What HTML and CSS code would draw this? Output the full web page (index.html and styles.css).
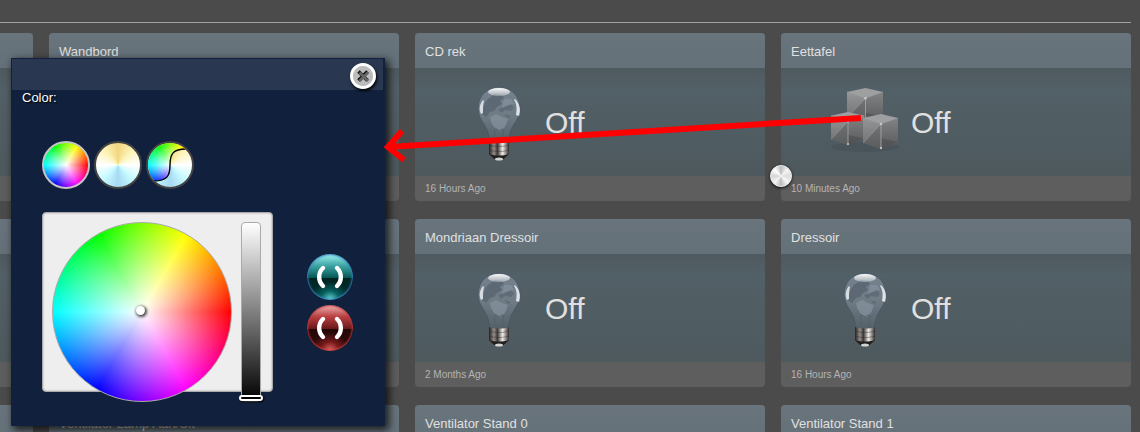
FILE: index.html
```
<!DOCTYPE html>
<html lang="nl">
<head>
    <meta charset="UTF-8">
    <meta name="viewport" content="width=device-width, initial-scale=1.0">
    <title>Dashboard</title>
    <link rel="stylesheet" href="styles.css">
</head>
<body>
    <!-- shared icons -->
    <svg class="defs" width="0" height="0" aria-hidden="true">
        <defs>
            <linearGradient id="glass" x1="0" y1="0" x2="0" y2="1">
                <stop offset="0" stop-color="#75818d"/>
                <stop offset="0.5" stop-color="#6f7c86"/>
                <stop offset="1" stop-color="#536067"/>
            </linearGradient>
            <linearGradient id="cap" x1="0" y1="0" x2="1" y2="0">
                <stop offset="0" stop-color="#25201e"/>
                <stop offset="0.25" stop-color="#958f8a"/>
                <stop offset="0.42" stop-color="#3d3836"/>
                <stop offset="0.68" stop-color="#f0eeeb"/>
                <stop offset="1" stop-color="#302c2b"/>
            </linearGradient>
            <linearGradient id="shine" x1="0" y1="0" x2="0" y2="1">
                <stop offset="0" stop-color="#ffffff" stop-opacity="0.95"/>
                <stop offset="1" stop-color="#ffffff" stop-opacity="0.3"/>
            </linearGradient>
            <linearGradient id="faceLeft" x1="0" y1="0" x2="0" y2="1">
                <stop offset="0" stop-color="#939596"/>
                <stop offset="1" stop-color="#6b6d6e"/>
            </linearGradient>
            <linearGradient id="faceRight" x1="0" y1="0" x2="0" y2="1">
                <stop offset="0" stop-color="#808283"/>
                <stop offset="1" stop-color="#58595a"/>
            </linearGradient>
            <symbol id="bulb" viewBox="0 0 48 80">
                <path d="M24 4C12 4 3 13 3 25c0 10 6 15 9 22 2 5 2 9 3 13h18c1-4 1-8 3-13 3-7 9-12 9-22C45 13 36 4 24 4z" fill="url(#glass)" stroke="#4a5768"/>
                <path d="M13 16l7-5 7 1 2 3-4 3 2 3-5 3-3 4-4 1-4 5-4-3c0-6 2-11 6-15z" fill="#55616c" opacity="0.75"/>
                <path d="M23 26l6-2 7-4 3 5-3 3-6-1-4 3zM29 31l7 2-3 2z" fill="#55616c" opacity="0.6"/>
                <path d="M15 34l6-3 6 3 6 2-3 8-5 4-6-4-3-5z" fill="#87939f" opacity="0.7"/>
                <path d="M29 16l7 0 3 5-8 2-4 2z" fill="#8b94a2" opacity="0.6"/>
                <path d="M20 57v-7l-1-3 3-1 2 2 2-2 3 1-1 3v7" fill="none" stroke="#4a5964" opacity="0.45"/>
                <ellipse cx="24" cy="9" rx="11" ry="4" fill="url(#shine)"/>
                <path d="M8 17c-4 5-4 10-2 14l2-1c0-4 0-9 1-12z" fill="#e2e7eb" opacity="0.9"/>
                <path d="M40 16c5 5 6 11 4 17l-3-1c1-6 1-11-2-15z" fill="#e8edf0" opacity="0.9"/>
                <path d="M14 58c6 2 14 2 20 0v13l-5 5H19l-5-5z" fill="url(#cap)"/>
                <path d="M14 62c6 2 14 2 20 0M14 67c6 2 14 2 20 0" fill="none" stroke="#282321" opacity="0.4"/>
                <path d="M14 71c6 2 14 2 20 0l-5 5H19z" fill="#221e1d"/>
                <ellipse cx="24" cy="76" rx="4" ry="1.6" fill="#d2d4d2"/>
            </symbol>
            <symbol id="cube" viewBox="0 0 36 36">
                <path d="M18 0l17 4-17 6L0 4z" fill="#9d9fa0"/>
                <path d="M0 4l18 6v25L0 29z" fill="url(#faceLeft)"/>
                <path d="M35 4l-17 6v25l17-6z" fill="url(#faceRight)"/>
                <path d="M0 29l18-19v25z" fill="#303334" opacity="0.28"/>
                <path d="M35 28L18 24v11z" fill="#303334" opacity="0.25"/>
                <path d="M0 29L18 10M0 4l18 6 17-6" fill="none" stroke="#b4b6b6" stroke-width="0.7" opacity="0.5"/>
                <path d="M18 10v25" fill="none" stroke="#b4b6b6" opacity="0.7"/>
                <circle cx="18" cy="10" r="1.2" fill="#c9cbcc"/>
                <circle cx="18" cy="34" r="1.2" fill="#b9bbbc"/>
            </symbol>
        </defs>
    </svg>

    <header class="topbar"></header>

    <main class="grid">
        <section class="card"><h2></h2><div class="card-body"></div><footer></footer></section>
        <section class="card">
            <h2>Wandbord</h2>
            <div class="card-body"></div>
            <footer></footer>
        </section>
        <section class="card">
            <h2>CD rek</h2>
            <div class="card-body">
                <svg class="icon"><use href="#bulb"/></svg>
                <span class="state">Off</span>
            </div>
            <footer>16 Hours Ago</footer>
        </section>
        <section class="card">
            <h2>Eettafel</h2>
            <div class="card-body">
                <svg class="icon" viewBox="0 0 72 80">
                    <ellipse cx="36" cy="64" rx="34" ry="5" fill="#3d474b" opacity="0.3"/>
                    <use href="#cube" x="18" y="5" width="37" height="37"/>
                    <use href="#cube" x="2" y="29" width="34" height="34"/>
                    <use href="#cube" x="34" y="31" width="36" height="36"/>
                </svg>
                <span class="state">Off</span>
                <input class="dimmer" type="range" min="0" max="100" value="0" aria-label="Eettafel">
            </div>
            <footer>10 Minutes Ago</footer>
        </section>

        <section class="card"><h2></h2><div class="card-body"></div><footer></footer></section>
        <section class="card"><h2></h2><div class="card-body"></div><footer></footer></section>
        <section class="card">
            <h2>Mondriaan Dressoir</h2>
            <div class="card-body">
                <svg class="icon"><use href="#bulb"/></svg>
                <span class="state">Off</span>
            </div>
            <footer>2 Months Ago</footer>
        </section>
        <section class="card">
            <h2>Dressoir</h2>
            <div class="card-body">
                <svg class="icon"><use href="#bulb"/></svg>
                <span class="state">Off</span>
            </div>
            <footer>16 Hours Ago</footer>
        </section>

        <section class="card"><h2></h2></section>
        <section class="card"><h2>Ventilator Lamp Aan/Uit</h2></section>
        <section class="card"><h2>Ventilator Stand 0</h2></section>
        <section class="card"><h2>Ventilator Stand 1</h2></section>
    </main>

    <div class="popup" role="dialog" aria-label="Color">
        <div class="popup-header">
            <button type="button" class="close" aria-label="Close">
                <svg viewBox="0 0 20 20" width="20" height="20">
                    <circle cx="10" cy="10" r="10" fill="#bcbcbc"/>
                    <path d="M5.5 5.5l9 9M14.5 5.5l-9 9" stroke="#111" stroke-width="3.6"/>
                    <path d="M6.5 6.5l8.5 8.5M15 6.5l-8.5 8.5" stroke="#666" stroke-width="2.8"/>
                </svg>
            </button>
        </div>
        <div class="popup-title">Color:</div>
        <div class="popup-content">
            <div class="picker">
                <div class="modes">
                    <button type="button" class="mode mode-color selected" aria-label="Color"></button>
                    <button type="button" class="mode mode-white" aria-label="White"></button>
                    <button type="button" class="mode mode-white" aria-label="Color and white">
                        <span class="mixed-half"></span>
                        <svg viewBox="0 0 44 44" width="44" height="44">
                            <path d="M6 38C19 38 22 33 22 22S25 6 38 6" fill="none" stroke="#000" stroke-width="1.4"/>
                        </svg>
                    </button>
                </div>
                <div class="panel">
                    <div class="wheel"><span class="wheel-dot"></span></div>
                    <input class="brightness" type="range" min="0" max="100" value="0" aria-label="Brightness">
                </div>
            </div>
            <div class="switches">
                <button type="button" class="switch on" aria-label="On">
                    <svg viewBox="0 0 46 46" width="46" height="46">
                        <path d="M16 14A12.5 12.5 0 0 0 16 32M30 14A12.5 12.5 0 0 1 30 32" fill="none" stroke="#fff" stroke-width="4.4" stroke-linecap="round"/>
                    </svg>
                </button>
                <button type="button" class="switch off" aria-label="Off">
                    <svg viewBox="0 0 46 46" width="46" height="46">
                        <path d="M16 14A12.5 12.5 0 0 0 16 32M30 14A12.5 12.5 0 0 1 30 32" fill="none" stroke="#fff" stroke-width="4.4" stroke-linecap="round"/>
                    </svg>
                </button>
            </div>
        </div>
    </div>

    <!-- arrow from the Eettafel icon to the popup -->
    <svg class="arrow" width="480" height="40" viewBox="0 0 480 40" aria-hidden="true">
        <path d="M477 5L4 34M18 18L4 34L20 47" fill="none" stroke="#f00" stroke-width="6"/>
    </svg>
</body>
</html>
```
FILE: styles.css
```
* {
    box-sizing: border-box;
}

body {
    margin: 0;
    height: 100vh;
    font-family: "Liberation Sans", Arial, sans-serif;
    font-size: 13px;
    color: #e0e0e0;
    background-color: #4b4b4b;
    overflow: hidden;
    position: relative;
}

.defs {
    position: absolute;
}

button {
    padding: 0;
    border: none;
    cursor: pointer;
}

.topbar {
    height: 23px;
    margin-right: 9px;
    border-bottom: 1px solid #a3a3a3;
}

/* the first column is scrolled partly out of view */
.grid {
    display: grid;
    grid-template-columns: repeat(4, minmax(0, 1fr));
    gap: 18px 16px;
    margin: 10px 9px 0 -317px;
}

.card {
    border-radius: 4px;
    background-color: #5e5e5e;
}

.card h2 {
    height: 35px;
    margin: 0;
    padding: 0 10px;
    border-radius: 4px 4px 0 0;
    font-size: 13px;
    font-weight: normal;
    line-height: 37px;
    background: linear-gradient(#69747c, #647179);
}

.card-body {
    position: relative;
    display: flex;
    align-items: center;
    height: 108px;
    padding: 2px 0 0 48px;
    background: linear-gradient(#4f5a5f, #526067 20%, #4d595d);
}

.icon {
    width: 72px;
    height: 80px;
}

.state {
    margin-left: 10px;
    font-size: 30px;
}

.card footer {
    height: 25px;
    padding: 0 10px;
    font-size: 10px;
    line-height: 25px;
    color: #b4b4b4;
}

.dimmer {
    position: absolute;
    left: -11px;
    right: 0;
    bottom: -11px;
    height: 22px;
    margin: 0;
    appearance: none;
    background: transparent;
}

.dimmer::-webkit-slider-thumb {
    appearance: none;
    width: 22px;
    height: 22px;
    border: 1px solid #eee;
    border-radius: 50%;
    background: conic-gradient(#bbb, #f4f4f4 45deg, #ddd 90deg, #f8f8f8 135deg, #bbb 180deg, #f4f4f4 225deg, #d5d5d5 270deg, #fff 315deg, #bbb);
    box-shadow: 0 1px 3px #111;
}

.popup {
    position: absolute;
    left: 11px;
    top: 58px;
    width: 374px;
    padding: 1px 2px 24px 1px;
    background-color: #11203c;
    box-shadow: 3px 3px 8px 1px rgba(0, 0, 0, 0.75);
    color: #fff;
}

.popup-header {
    display: flex;
    justify-content: flex-end;
    height: 31px;
    padding: 4px 7px;
    background-color: #2a3751;
}

.close {
    width: 26px;
    height: 26px;
    border: 3px solid #fff;
    border-radius: 50%;
    background: #bcbcbc;
    box-shadow: 1px 2px 3px #000;
}

.close svg {
    display: block;
}

.popup-title {
    padding-left: 10px;
    line-height: 15px;
    text-shadow: 1px 1px 1px #000;
}

.popup-content {
    display: flex;
    gap: 34px;
    padding: 36px 30px 10px;
}

.modes {
    display: flex;
    gap: 4px;
    margin-bottom: 23px;
}

.mode {
    position: relative;
    width: 48px;
    height: 48px;
    border: 2px solid #444;
    border-radius: 50%;
    overflow: hidden;
}

.mode-white {
    background: conic-gradient(#f2d67e, #fdf4b8 45deg, #fff 90deg, #c5faff 135deg, #a8d8f4 180deg, #c5faff 225deg, #fff 270deg, #fdf4b8 315deg, #f2d67e);
}

.mode-color,
.mixed-half,
.wheel {
    background:
        radial-gradient(closest-side, #fff, rgba(255, 255, 255, 0)),
        conic-gradient(from 90deg, #f00, #f0f, #00f, #0ff, #0f0, #ff0, #f00);
}

.mode.selected {
    border-color: #c4c4c4;
}

.mixed-half {
    position: absolute;
    inset: 0;
    clip-path: path("M0 38H6C19 38 22 33 22 22S25 6 38 6V0H0Z");
}

.mode svg {
    position: absolute;
    left: 0;
    top: 0;
}

.panel {
    display: flex;
    gap: 7px;
    width: 231px;
    height: 180px;
    padding: 9px;
    border: 1px solid #aaa;
    border-radius: 4px;
    background-color: #eee;
    box-shadow: inset 0 0 2px #999;
}

.wheel {
    position: relative;
    flex: none;
    width: 180px;
    height: 180px;
    border: 1px solid #aaa;
    border-radius: 50%;
}

.wheel-dot {
    position: absolute;
    left: 83px;
    top: 83px;
    width: 9px;
    height: 9px;
    border-radius: 50%;
    background-color: #fff;
    box-shadow: 1px 1px 3px 1px #444;
}

.brightness {
    width: 24px;
    height: 180px;
    margin: 0;
    appearance: none;
    writing-mode: vertical-lr;
    direction: rtl;
    background: transparent;
}

.brightness::-webkit-slider-runnable-track {
    width: 20px;
    height: 180px;
    border: 1px solid #aaa;
    border-radius: 4px;
    background: linear-gradient(#fff, #000);
}

.brightness::-webkit-slider-thumb {
    appearance: none;
    width: 24px;
    height: 6px;
    margin-left: -3px;
    border: 2px solid #fff;
    border-radius: 3px;
    background: #000;
    box-shadow: 1px 1px 2px #000;
}

.switches {
    display: flex;
    flex-direction: column;
    gap: 5px;
    padding-top: 113px;
}

.switch {
    width: 46px;
    height: 46px;
    border-radius: 50%;
}

.switch svg {
    display: block;
}

.on {
    background:
        radial-gradient(circle at 50% 100%, #6ddcd8, rgba(10, 130, 130, 0.6) 18%, rgba(0, 60, 60, 0) 36%),
        linear-gradient(#a0f5f2, #3fa5a5 25%, #055554 52%, #002321 53%, #033433);
    box-shadow: inset 0 0 2px 1px #3b83cb;
}

.off {
    background:
        radial-gradient(circle at 50% 100%, #e76a6a, rgba(170, 35, 35, 0.6) 18%, rgba(60, 0, 0, 0) 36%),
        linear-gradient(#f0b5b5, #ba4042 25%, #681718 52%, #220707 53%, #330c0d);
    box-shadow: inset 0 0 2px 1px #c23c3f;
}

/* drawn over the cards and the popup */
.arrow {
    position: absolute;
    left: 384px;
    top: 113px;
    overflow: visible;
    pointer-events: none;
}
```
